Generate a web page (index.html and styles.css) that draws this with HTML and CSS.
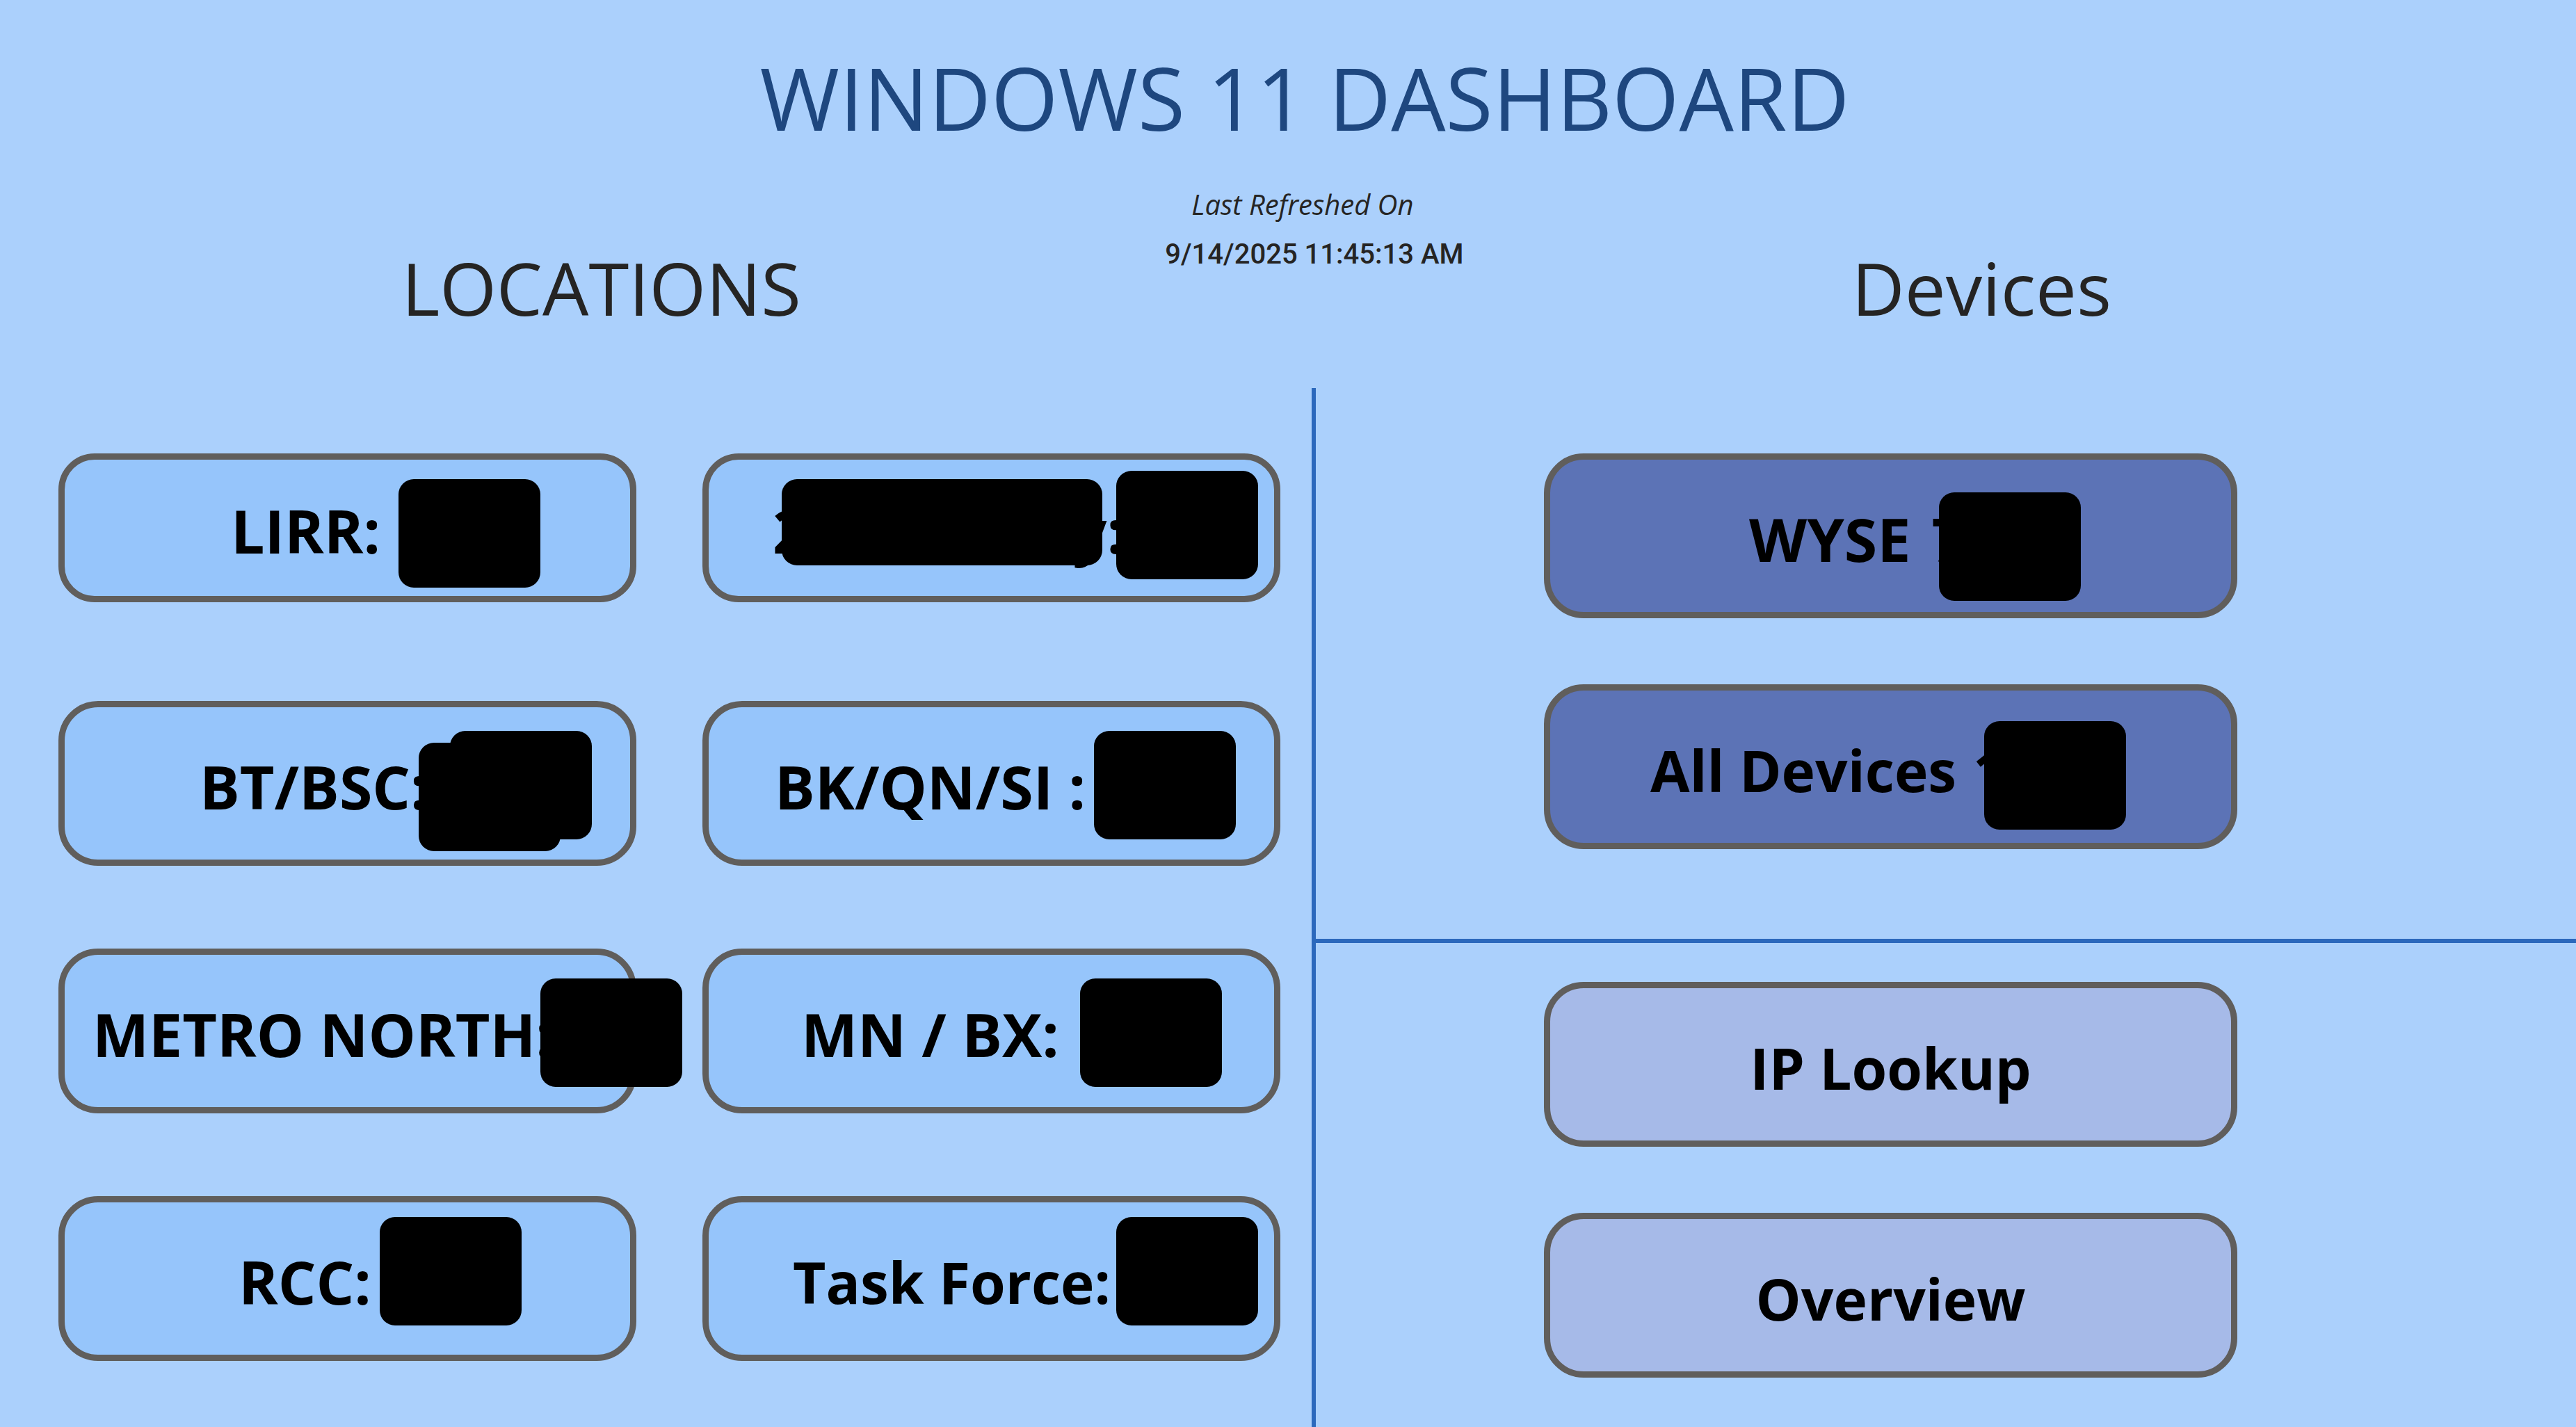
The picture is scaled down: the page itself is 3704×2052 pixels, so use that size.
FILE: index.html
```html
<!DOCTYPE html>
<html lang="en">
<head>
<meta charset="utf-8">
<title>Windows 11 Dashboard</title>
<link rel="stylesheet" href="styles.css">
</head>
<body>
<header class="header">
  <h1 class="title">WINDOWS 11 DASHBOARD</h1>
  <h2 class="heading heading-locations">LOCATIONS</h2>
  <div class="refreshed">
    <p class="refreshed-label">Last Refreshed On</p>
    <p class="refreshed-time">9/14/2025 11:45:13 AM</p>
  </div>
  <h2 class="heading heading-devices">Devices</h2>
</header>
<main class="main">
  <section class="locations">
    <button class="card card-short lirr"><span>LIRR:</span><span class="mask"></span></button>
    <button class="card card-short hq"><span>2</span><span class="label-end">y:</span><span class="mask mask-name"></span><span class="mask"></span></button>
    <button class="card bt"><span>BT/BSC:</span><span class="mask mask-back"></span><span class="mask"></span></button>
    <button class="card bk"><span>BK/QN/SI :</span><span class="mask"></span></button>
    <button class="card metro"><span>METRO NORTH:</span><span class="mask"></span></button>
    <button class="card mn"><span>MN / BX:</span><span>4</span><span class="mask"></span></button>
    <button class="card rcc"><span>RCC:</span><span class="mask"></span></button>
    <button class="card card-mixed task"><span>Task Force:</span><span class="mask"></span></button>
  </section>
  <div class="side">
    <section class="stack devices">
      <button class="card card-dark wyse"><span>WYSE</span><span>7</span><span class="mask"></span></button>
      <button class="card card-mixed card-dark all"><span>All Devices</span><span>1</span><span class="mask"></span></button>
    </section>
    <section class="stack tools">
      <button class="card card-mixed card-light">IP Lookup</button>
      <button class="card card-mixed card-light">Overview</button>
    </section>
  </div>
</main>
</body>
</html>
```
FILE: styles.css
```css
* {
  box-sizing: border-box;
}

body {
  margin: 0;
  min-height: 100vh;
  display: flex;
  flex-direction: column;
  background: #abd0fc;
  color: #252423;
  font-family: "Open Sans", "Noto Sans", sans-serif;
}

h1, h2, p {
  margin: 0;
  font-weight: 400;
}

/* Header */
.header {
  display: grid;
  grid-template-columns: 1660fr 440fr 1604fr;
  grid-template-rows: 258px 300px;
  text-align: center;
  white-space: nowrap;
}

.title {
  grid-column: 1 / -1;
  padding: 56px 0 0 48px;
  font-size: 124px;
  line-height: 168px;
  color: #1e477f;
}

.heading {
  padding-top: 82px;
  font-size: 105px;
  line-height: 148px;
}

.heading-locations {
  padding-left: 74px;
}

.heading-devices {
  padding-right: 110px;
}

.refreshed {
  display: flex;
  flex-direction: column;
  align-items: center;
  gap: 16px;
  padding-top: 8px;
}

.refreshed-label {
  padding-right: 14px;
  font-size: 40px;
  line-height: 56px;
  font-style: italic;
}

.refreshed-time {
  padding-left: 20px;
  font-family: Roboto, sans-serif;
  font-size: 40px;
  font-weight: 500;
  line-height: 56px;
}

/* Body columns */
.main {
  flex: 1;
  display: grid;
  grid-template-columns: 1886fr 1818fr;
}

.locations {
  display: grid;
  grid-template-columns: 1fr 1fr;
  grid-auto-rows: 237px;
  gap: 119px 95px;
  padding: 94px 45px 95px 84px;
}

.side {
  border-left: 6px solid #2b68bc;
}

.stack {
  display: grid;
  grid-template-columns: 328fr 997fr 487fr;
  grid-auto-rows: 237px;
  row-gap: 95px;
}

.stack .card {
  grid-column: 2;
}

.devices {
  padding: 94px 0 129px;
  border-bottom: 6px solid #2b68bc;
}

.tools {
  padding: 56px 0 71px;
}

/* Cards */
.card {
  --start: 0px;
  position: relative;
  display: flex;
  align-items: center;
  gap: 30px;
  padding: 8px 0 0 var(--start);
  border: 9px solid #605e5c;
  border-radius: 57px;
  background: #96c5fb;
  color: #000;
  font-family: inherit;
  font-size: 86px;
  font-weight: 700;
  line-height: 118px;
  white-space: nowrap;
  cursor: pointer;
}

.card-short {
  height: 214px;
  border-radius: 52px;
}

.card-mixed {
  gap: 24px;
  font-size: 82px;
}

.card-dark {
  background: #5c73b6;
}

.card-light {
  justify-content: center;
  background: #a6bae8;
}

/* Blocks covering the figures */
.mask {
  position: absolute;
  left: var(--mask-x);
  top: var(--mask-y);
  width: 204px;
  height: 156px;
  border-radius: 22px;
  background: #000;
}

.lirr { --start: 239px; --mask-x: 480px; --mask-y: 28px; }
.hq { --start: 92px; --mask-x: 586px; --mask-y: 16px; }
.bt { --start: 194px; --mask-x: 554px; --mask-y: 34px; }
.bk { --start: 95px; --mask-x: 554px; --mask-y: 34px; }
.metro { --start: 40px; --mask-x: 684px; --mask-y: 34px; }
.mn { --start: 133px; --mask-x: 534px; --mask-y: 34px; }
.rcc { --start: 250px; --mask-x: 453px; --mask-y: 21px; }
.task { --start: 121px; --mask-x: 586px; --mask-y: 21px; }
.wyse { --start: 286px; --mask-x: 559px; --mask-y: 47px; }
.all { --start: 144px; --mask-x: 624px; --mask-y: 44px; }

.hq .label-end {
  margin-left: auto;
  padding-right: 216px;
}

.mask-name {
  left: 105px;
  top: 28px;
  width: 461px;
  height: 124px;
}

.mask-back {
  left: 509px;
  top: 51px;
}
```
